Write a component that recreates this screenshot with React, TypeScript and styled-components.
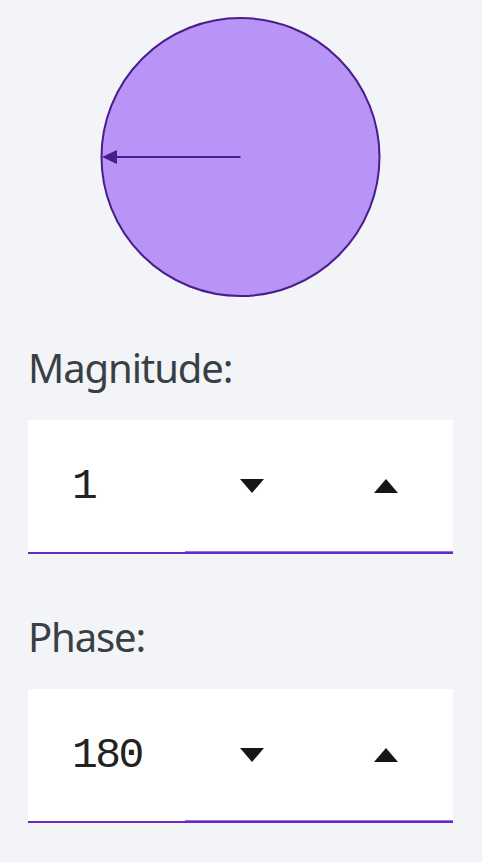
import React from "react";
import styled, { createGlobalStyle } from "styled-components";

const Global = createGlobalStyle`
  html, body { margin: 0; padding: 0; background: #f2f4f8; }
  body { font-family: "Noto Sans", sans-serif; }
`;

const Page = styled.div`
  display: flex;
  flex-direction: column;
  padding: 17px 29px 0 28px;
  width: 482px;
  box-sizing: border-box;
`;

const Dial = styled.svg`
  display: block;
  align-self: center;
`;

const Label = styled.div<{ $top: number }>`
  margin-top: ${(p) => p.$top}px;
  font-family: "Noto Sans", sans-serif;
  font-size: 40px;
  line-height: 48px;
  color: #393f44;
  letter-spacing: -1.1px;
`;

const Field = styled.div`
  margin-top: 28px;
  display: flex;
  height: 134px;
  background: #ffffff;
`;

const Value = styled.div`
  width: 157px;
  box-sizing: border-box;
  padding-left: 44px;
  display: flex;
  align-items: center;
  border-bottom: 2px solid #6929c4;
  font-family: "Liberation Mono", monospace;
  font-size: 43px;
  letter-spacing: -2.5px;
  color: #222222;
`;

const Steppers = styled.div`
  flex: 1;
  display: flex;
  border-bottom: 2px solid #6929c4;
  box-shadow: inset 0 -1px 0 #9a70dc;
`;

const StepButton = styled.button`
  flex: 1;
  border: none;
  background: transparent;
  display: flex;
  align-items: center;
  justify-content: center;
  padding: 0;
  cursor: pointer;
`;

const Tri = ({ up }: { up?: boolean }) => (
  <svg width="24" height="14" viewBox="0 0 24 14">
    {up ? (
      <polygon points="0,14 24,14 12,0" fill="#161616" />
    ) : (
      <polygon points="0,0 24,0 12,14" fill="#161616" />
    )}
  </svg>
);

const NumberField = ({ value }: { value: string }) => (
  <Field>
    <Value>{value}</Value>
    <Steppers>
      <StepButton aria-label="decrement">
        <Tri />
      </StepButton>
      <StepButton aria-label="increment">
        <Tri up />
      </StepButton>
    </Steppers>
  </Field>
);

export default function App() {
  return (
    <>
      <Global />
      <Page>
        <Dial width="281" height="281" viewBox="0 0 281 281">
          <circle cx="140.5" cy="140" r="139" fill="#b794f6" stroke="#491d8b" strokeWidth="2" />
          <line x1="140.5" y1="140" x2="14" y2="140" stroke="#491d8b" strokeWidth="2" />
          <polygon points="2,140 17,133 17,147" fill="#491d8b" />
        </Dial>
        <Label $top={46}>Magnitude:</Label>
        <NumberField value="1" />
        <Label $top={59}>Phase:</Label>
        <NumberField value="180" />
      </Page>
    </>
  );
}
